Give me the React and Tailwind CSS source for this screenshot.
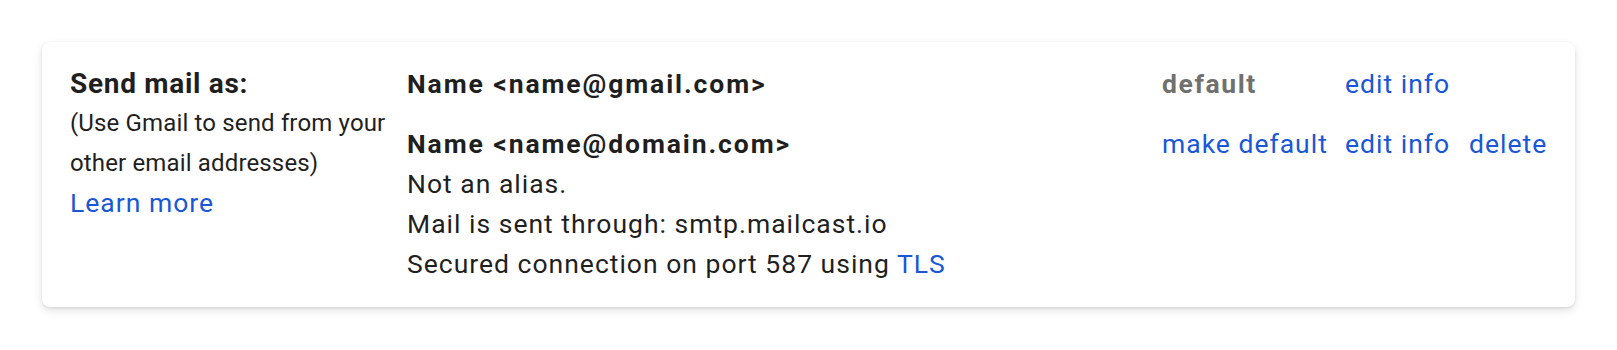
export default function App() {
  const link = 'text-[#1a57d6] cursor-pointer hover:underline';

  return (
    <div className="min-h-screen bg-white p-[42px] font-['Roboto',sans-serif] text-[#1f1f1f]">
      <div className="flex rounded-lg bg-white pt-[22px] pb-[23px] pl-[28px] pr-[29px] shadow-[0_1px_3px_rgba(0,0,0,0.10),0_4px_10px_rgba(0,0,0,0.10)]">
        <div className="w-[337px] shrink-0">
          <div className="text-[28px] font-bold leading-[40px] tracking-[0.7px]">Send mail as:</div>
          <div className="text-[24px] leading-[39.5px] tracking-[0.15px]">
            (Use Gmail to send from your
            <br />
            other email addresses)
          </div>
          <div className={`text-[26.5px] leading-[40px] tracking-[1px] ${link}`}>Learn more</div>
        </div>

        <div className="flex-1 text-[26.5px] leading-[40px] tracking-[1px]">
          <div className="flex">
            <div className="flex-1 font-bold tracking-[1.9px]">Name &lt;name@gmail.com&gt;</div>
            <div className="grid grid-cols-[183px_124px_77px]">
              <span className="font-bold tracking-[1.6px] text-[#707070]">default</span>
              <span className={link}>edit info</span>
              <span />
            </div>
          </div>

          <div className="mt-[20px] flex">
            <div className="flex-1">
              <div className="font-bold tracking-[1.9px]">Name &lt;name@domain.com&gt;</div>
              <div>Not an alias.</div>
              <div>Mail is sent through: smtp.mailcast.io</div>
              <div>
                Secured connection on port 587 using <span className={link}>TLS</span>
              </div>
            </div>
            <div className="grid h-[40px] grid-cols-[183px_124px_77px]">
              <span className={link}>make default</span>
              <span className={link}>edit info</span>
              <span className={link}>delete</span>
            </div>
          </div>
        </div>
      </div>
    </div>
  );
}
